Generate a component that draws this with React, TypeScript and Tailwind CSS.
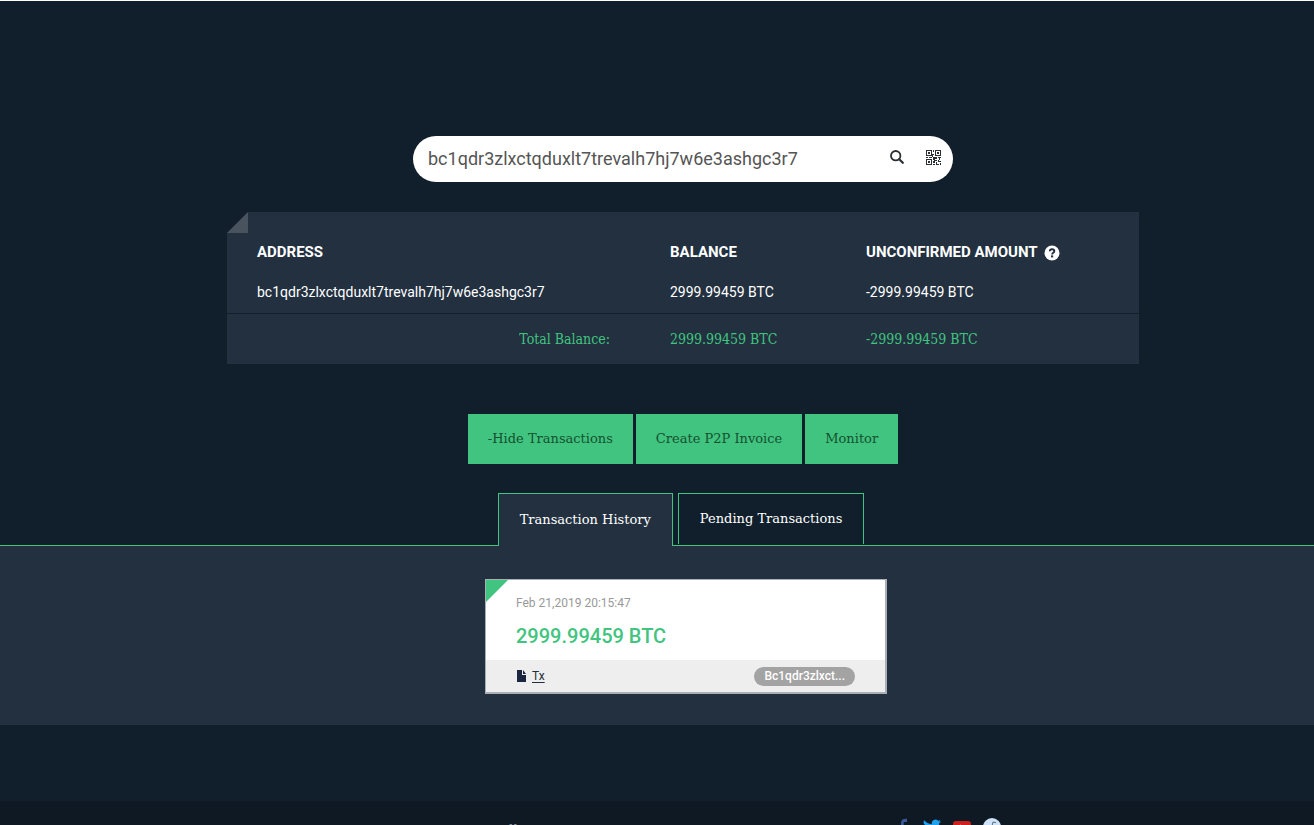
interface Balance {
  address: string;
  balance: string;
  unconfirmed: string;
}

const balances: Balance[] = [
  {
    address: 'bc1qdr3zlxctqduxlt7trevalh7hj7w6e3ashgc3r7',
    balance: '2999.99459 BTC',
    unconfirmed: '-2999.99459 BTC',
  },
];

function SearchIcon() {
  return (
    <svg className="w-[14px] h-[14px]" viewBox="0 0 14 14" fill="none" stroke="#2b2f33" aria-hidden="true">
      <circle cx="5.7" cy="5.7" r="4.7" strokeWidth="1.8" />
      <path d="M9.2 9.2L12.8 12.8" strokeWidth="2.2" strokeLinecap="round" />
    </svg>
  );
}

function QrIcon() {
  return (
    <svg className="w-[15px] h-[15px]" viewBox="0 0 15 15" fill="#2b2f33" fillRule="evenodd" aria-hidden="true">
      <path d="M0 0h6v6H0zM1 1v4h4V1zM2 2h2v2H2z" />
      <path d="M9 0h6v6H9zM10 1v4h4V1zM11 2h2v2h-2z" />
      <path d="M0 9h6v6H0zM1 10v4h4v-4zM2 11h2v2H2z" />
      <path d="M7 0h1v2H7zM6 4h2v1H7v2H6zM0 7h2v1H0zM3 7h3v1H3zM7 7h4v2H9v1H7zM12 7h3v1h-1v2h-1V8h-1zM8 10h3v1H9v2H7v-2h1zM12 10h1v1h2v1h-3zM7 14h2v1H7zM10 12h1v2h2v1h-3zM14 13h1v2h-1z" />
    </svg>
  );
}

function HelpIcon() {
  return (
    <svg className="w-4 h-4" viewBox="0 0 16 16" aria-hidden="true">
      <circle cx="8" cy="8" r="7.5" fill="#fff" />
      <path d="M5.8 6.3C5.8 3.6 10.3 3.7 10.3 6.2C10.3 7.8 8.1 7.7 8.1 9.4" fill="none" stroke="#22303f" strokeWidth="1.9" />
      <path d="M7 10.4h2.2v2H7z" fill="#22303f" />
    </svg>
  );
}

function FileIcon() {
  return (
    <svg className="w-[9px] h-3" viewBox="0 0 9 12" fill="#1b2740" aria-hidden="true">
      <path d="M0 0h5v5h4v7H0zM6 0l3 4H6z" />
    </svg>
  );
}

const actionClass =
  "h-[50px] px-5 bg-[#41c480] text-[#14512f] text-[13px] font-['Roboto_Slab','DejaVu_Serif',serif]";

const tabClass =
  "px-[21px] border border-b-0 border-[#41c480] text-white text-[13px] font-['Roboto_Slab','DejaVu_Serif',serif]";

export default function App() {
  return (
    <div className="h-screen overflow-hidden flex flex-col bg-[#111f2c] border-t border-white font-[Roboto,sans-serif] text-sm text-white">
      <main className="shrink-0">
        <div className="pl-[52px] pt-[135px] flex flex-col items-center">
          <form className="w-[540px] h-[46px] pl-[15px] pr-px rounded-full bg-white flex items-center">
            <input
              type="text"
              aria-label="Address"
              defaultValue={balances[0].address}
              className="flex-1 min-w-0 text-lg text-[#555] bg-transparent outline-none"
            />
            <button type="button" aria-label="Search" className="w-[37px] h-8 pb-1 flex items-center justify-center">
              <SearchIcon />
            </button>
            <button type="button" aria-label="Scan QR code" className="w-[37px] h-8 pb-1 flex items-center justify-center">
              <QrIcon />
            </button>
          </form>

          <div className="relative mt-[30px] w-full max-w-[912px] bg-[#22303f]">
            <svg className="absolute top-0 left-0 w-[21px] h-[21px]" viewBox="0 0 21 21" aria-hidden="true">
              <path d="M0 0h21L0 21z" fill="#111f2c" />
              <path d="M21 0v21H0z" fill="#48535e" />
            </svg>
            <table className="w-full table-fixed text-left">
              <colgroup>
                <col className="w-[413px]" />
                <col className="w-[196px]" />
                <col />
              </colgroup>
              <thead>
                <tr className="h-[60px] text-[15px]">
                  <th className="pl-[30px] pt-[22px] font-bold">ADDRESS</th>
                  <th className="pl-[30px] pt-[22px] font-bold">BALANCE</th>
                  <th className="pl-[30px] pt-[22px] font-bold">
                    <span className="flex items-center gap-1.5">
                      UNCONFIRMED AMOUNT
                      <HelpIcon />
                    </span>
                  </th>
                </tr>
              </thead>
              <tbody>
                {balances.map((row) => (
                  <tr key={row.address} className="h-[41px] border-b border-[#111f2c]">
                    <td className="pl-[30px]">{row.address}</td>
                    <td className="pl-[30px]">{row.balance}</td>
                    <td className="pl-[30px]">{row.unconfirmed}</td>
                  </tr>
                ))}
              </tbody>
              <tfoot>
                <tr className="h-[51px] text-[#41c480] font-['Roboto_Slab','DejaVu_Serif_Condensed','DejaVu_Serif',serif]">
                  <td className="pr-[30px] text-right">Total Balance:</td>
                  <td className="pl-[30px]">2999.99459 BTC</td>
                  <td className="pl-[30px]">-2999.99459 BTC</td>
                </tr>
              </tfoot>
            </table>
          </div>

          <div className="mt-[50px] flex gap-[3px]">
            <button type="button" className={actionClass}>-Hide Transactions</button>
            <button type="button" className={actionClass}>Create P2P Invoice</button>
            <button type="button" className={actionClass}>Monitor</button>
          </div>
        </div>

        <div role="tablist" className="mt-[29px] pl-12 flex justify-center items-start gap-[5px] border-b border-[#41c480]">
          <button type="button" role="tab" aria-selected="true" className={`${tabClass} h-[53px] -mb-px bg-[#22303f]`}>
            Transaction History
          </button>
          <button type="button" role="tab" aria-selected="false" className={`${tabClass} h-[51px] mb-px pt-px`}>
            Pending Transactions
          </button>
        </div>

        <section className="pl-[58px] pt-[33px] pb-[31px] flex justify-center bg-[#22303f]">
          <article className="relative w-[402px] border border-r-2 border-b-2 border-[#a9b0b5] bg-white">
            <svg className="absolute top-0 left-0 w-[22px] h-[22px]" viewBox="0 0 22 22" aria-hidden="true">
              <path d="M0 0h22L0 22z" fill="#41c480" />
            </svg>
            <div className="h-20 pl-[30px] pt-[14px]">
              <time className="block text-xs leading-[18px] text-[#999]">Feb 21,2019 20:15:47</time>
              <p className="mt-2 text-xl leading-8 font-medium text-[#41c480]">2999.99459 BTC</p>
            </div>
            <div className="h-8 pl-[31px] pr-[30px] bg-[#eee] flex items-center justify-between">
              <a href="#tx" className="flex items-center gap-1.5 text-xs text-[#222e3a]">
                <FileIcon />
                <span className="underline underline-offset-2">Tx</span>
              </a>
              <span className="h-[19px] px-2.5 rounded-full bg-[#a3a3a3] text-white text-xs leading-[18px] font-medium">
                Bc1qdr3zlxct...
              </span>
            </div>
          </article>
        </section>
      </main>

      <footer className="shrink-0 mt-[76px] h-20 pt-[17px] pl-[509px] flex items-start bg-[#0e1923]">
        <p className="w-[386px] pt-0.5 text-sm leading-5 text-[#8a949c] font-['Roboto_Slab','DejaVu_Serif',serif]">ll</p>
        <div className="flex items-start gap-3">
          <a href="#facebook" aria-label="Facebook">
            <svg className="w-4 h-[18px]" viewBox="1 0 16 18" fill="#3b5998">
              <path d="M7 18V10H4V7h3V5c0-3 2-4.500 6-4.200V4h-2c-1 0-1.300.4-1.300 1.300V7H13l-.4 3H9.700v8z" />
            </svg>
          </a>
          <a href="#twitter" aria-label="Twitter">
            <svg className="w-[18px] h-[18px]" viewBox="0 0 24 24" fill="#1da1f2">
              <path d="M23.950 4.570a10 10 0 01-2.820.770 4.960 4.960 0 002.160-2.720c-.950.550-2.010.950-3.130 1.180a4.920 4.920 0 00-8.380 4.480C7.690 8.090 4.070 6.130 1.640 3.160a4.930 4.930 0 001.520 6.570 4.900 4.900 0 01-2.230-.610v.060a4.920 4.920 0 003.950 4.830 5 5 0 01-2.210.080 4.940 4.940 0 004.600 3.420A9.870 9.870 0 010 19.540a13.990 13.990 0 007.550 2.210c9.050 0 14-7.500 14-13.980 0-.210 0-.420-.020-.630a9.940 9.940 0 002.460-2.550z" />
            </svg>
          </a>
          <a href="#youtube" aria-label="YouTube">
            <svg className="w-[18px] h-[18px]" viewBox="0 0 18 18">
              <rect x="0" y="3" width="18" height="13" rx="3" fill="#cd201f" />
              <path d="M7 6.500v6l5-3z" fill="#fff" />
            </svg>
          </a>
          <a href="#reddit" aria-label="Reddit">
            <svg className="w-[18px] h-[18px]" viewBox="0 0 18 18">
              <circle cx="9" cy="9" r="9" fill="#cee3f8" />
              <path d="M9 8l1-4 3 .700" fill="none" stroke="#5b6b7d" />
              <ellipse cx="9" cy="11" rx="5" ry="3.500" fill="#fff" />
            </svg>
          </a>
        </div>
      </footer>
    </div>
  );
}
